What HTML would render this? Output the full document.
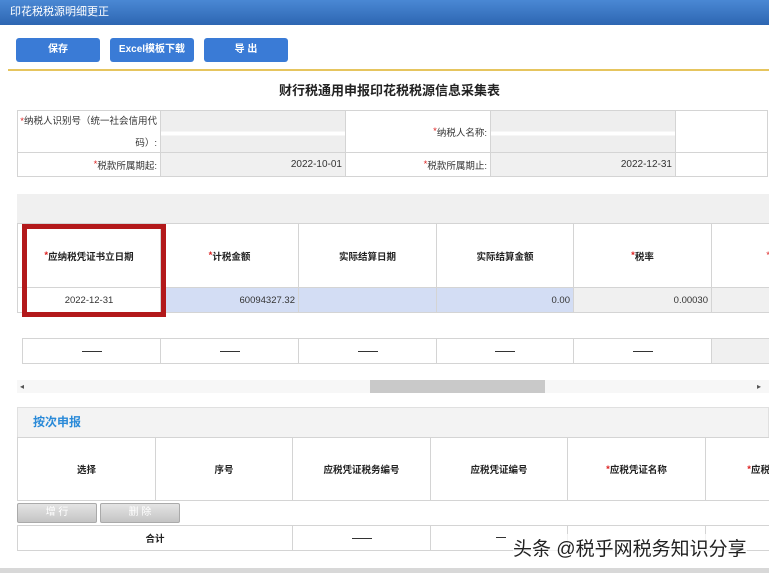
<!DOCTYPE html>
<html><head><meta charset="utf-8"><style>
*{margin:0;padding:0;box-sizing:border-box}
body{width:769px;height:573px;overflow:hidden;background:#fff;font-family:"Liberation Sans","Noto Sans CJK SC",sans-serif;font-size:10px;color:#333;position:relative}
.a{position:absolute}
.bar{left:0;top:0;width:769px;height:25px;background:linear-gradient(#4a88d4,#2d66b2);color:#fff;font-size:11px;line-height:25px;padding-left:10px}
.btn{top:38px;height:24px;width:84px;background:#3a7bd6;border-radius:3px;color:#fff;font-size:10px;font-weight:bold;text-align:center;line-height:24px}
.c{border:1px solid #d4d4d4;display:flex;align-items:center;justify-content:center;font-size:9.5px}
.h{font-weight:bold;color:#222}
.r{justify-content:flex-end;padding-right:3px}
.g{background:#f0f0f0}
.b{background:#d3ddf4}
.s{color:#d22}
.d{display:inline-block;width:20px;border-top:1px solid #333}
.gb{top:503px;height:20px;width:80px;background:linear-gradient(#e4e4e4,#c4c4c4);border:1px solid #aaa;border-radius:2px;color:#fff;text-align:center;line-height:18px;font-size:10px}
</style></head><body>
<div class="a bar">印花税税源明细更正</div>
<div class="a btn" style="left:16px">保存</div>
<div class="a btn" style="left:110px">Excel模板下载</div>
<div class="a btn" style="left:204px">导 出</div>
<div class="a" style="left:8px;top:69px;width:761px;height:2px;background:#e6c55e"></div>
<div class="a" style="left:0;width:769px;top:80px;text-align:center;font-size:13px;font-weight:bold;color:#222;padding-left:10px">财行税通用申报印花税税源信息采集表</div>

<div class="a c r" style="left:17px;top:110px;width:144px;height:43px;text-align:right;line-height:22px;display:block;padding-top:0"><span class="s">*</span>纳税人识别号（统一社会信用代<br>码）:</div>
<div class="a c" style="left:160px;top:110px;width:186px;height:43px;background:linear-gradient(#eee,#eee 50%,#fff 50%,#fff 60%,#eee 60%)"></div>
<div class="a c r" style="left:345px;top:110px;width:146px;height:43px"><span class="s">*</span>纳税人名称:</div>
<div class="a c" style="left:490px;top:110px;width:186px;height:43px;background:linear-gradient(#eee,#eee 50%,#fff 50%,#fff 60%,#eee 60%)"></div>
<div class="a c" style="left:675px;top:110px;width:93px;height:43px"></div>
<div class="a c r" style="left:17px;top:152px;width:144px;height:25px"><span class="s">*</span>税款所属期起:</div>
<div class="a c r g" style="left:160px;top:152px;width:186px;height:25px;font-size:10px">2022-10-01</div>
<div class="a c r" style="left:345px;top:152px;width:146px;height:25px"><span class="s">*</span>税款所属期止:</div>
<div class="a c r g" style="left:490px;top:152px;width:186px;height:25px;font-size:10px">2022-12-31</div>
<div class="a c" style="left:675px;top:152px;width:93px;height:25px"></div>

<div class="a g" style="left:17px;top:194px;width:752px;height:29px"></div>
<div class="a c h" style="left:17px;top:223px;width:144px;height:65px"><span class="s">*</span>应纳税凭证书立日期</div>
<div class="a c h" style="left:160px;top:223px;width:139px;height:65px"><span class="s">*</span>计税金额</div>
<div class="a c h" style="left:298px;top:223px;width:139px;height:65px">实际结算日期</div>
<div class="a c h" style="left:436px;top:223px;width:138px;height:65px">实际结算金额</div>
<div class="a c h" style="left:573px;top:223px;width:139px;height:65px"><span class="s">*</span>税率</div>
<div class="a c" style="left:711px;top:223px;width:60px;height:65px;justify-content:flex-end"><span class="s">*</span></div>
<div class="a c" style="left:17px;top:287px;width:144px;height:26px">2022-12-31</div>
<div class="a c r b" style="left:160px;top:287px;width:139px;height:26px">60094327.32</div>
<div class="a c b" style="left:298px;top:287px;width:139px;height:26px"></div>
<div class="a c r b" style="left:436px;top:287px;width:138px;height:26px">0.00</div>
<div class="a c r g" style="left:573px;top:287px;width:139px;height:26px">0.00030</div>
<div class="a c g" style="left:711px;top:287px;width:60px;height:26px"></div>
<div class="a" style="left:22px;top:224px;width:144px;height:93px;border:5px solid #b3191b"></div>

<div class="a c" style="left:22px;top:338px;width:139px;height:26px"><span class="d"></span></div>
<div class="a c" style="left:160px;top:338px;width:139px;height:26px"><span class="d"></span></div>
<div class="a c" style="left:298px;top:338px;width:139px;height:26px"><span class="d"></span></div>
<div class="a c" style="left:436px;top:338px;width:138px;height:26px"><span class="d"></span></div>
<div class="a c" style="left:573px;top:338px;width:139px;height:26px"><span class="d"></span></div>
<div class="a c g" style="left:711px;top:338px;width:60px;height:26px"></div>

<div class="a" style="left:17px;top:380px;width:752px;height:13px;background:#f7f7f7;font-size:8px;line-height:13px;color:#555"><span style="padding-left:3px">◂</span><span style="position:absolute;right:8px">▸</span></div>
<div class="a" style="left:370px;top:380px;width:175px;height:13px;background:#c9c9c9"></div>

<div class="a" style="left:17px;top:407px;width:752px;height:31px;background:#f3f3f3;border:1px solid #e0e0e0;color:#2a8ad8;font-size:12px;font-weight:bold;line-height:29px;padding-left:15px">按次申报</div>
<div class="a c h" style="left:17px;top:437px;width:139px;height:64px">选择</div>
<div class="a c h" style="left:155px;top:437px;width:138px;height:64px">序号</div>
<div class="a c h" style="left:292px;top:437px;width:139px;height:64px">应税凭证税务编号</div>
<div class="a c h" style="left:430px;top:437px;width:138px;height:64px">应税凭证编号</div>
<div class="a c h" style="left:567px;top:437px;width:139px;height:64px"><span class="s">*</span>应税凭证名称</div>
<div class="a c h" style="left:705px;top:437px;width:66px;height:64px;justify-content:flex-end;overflow:hidden"><span class="s">*</span>应税</div>
<div class="a gb" style="left:17px">增 行</div>
<div class="a gb" style="left:100px">删 除</div>
<div class="a c h" style="left:17px;top:525px;width:276px;height:26px">合计</div>
<div class="a c" style="left:292px;top:525px;width:139px;height:26px"><span class="d"></span></div>
<div class="a c" style="left:430px;top:525px;width:138px;height:26px"></div>
<div class="a c" style="left:567px;top:525px;width:139px;height:26px"></div>
<div class="a c" style="left:705px;top:525px;width:66px;height:26px"></div>
<div class="a" style="left:496px;top:537px;width:10px;border-top:1px solid #333"></div>
<div class="a" style="left:513px;top:534px;font-size:19px;color:#222;background:rgba(255,255,255,.7)">头条 @税乎网税务知识分享</div>
<div class="a" style="left:0;top:568px;width:769px;height:5px;background:#d8d8d8"></div>
</body></html>
